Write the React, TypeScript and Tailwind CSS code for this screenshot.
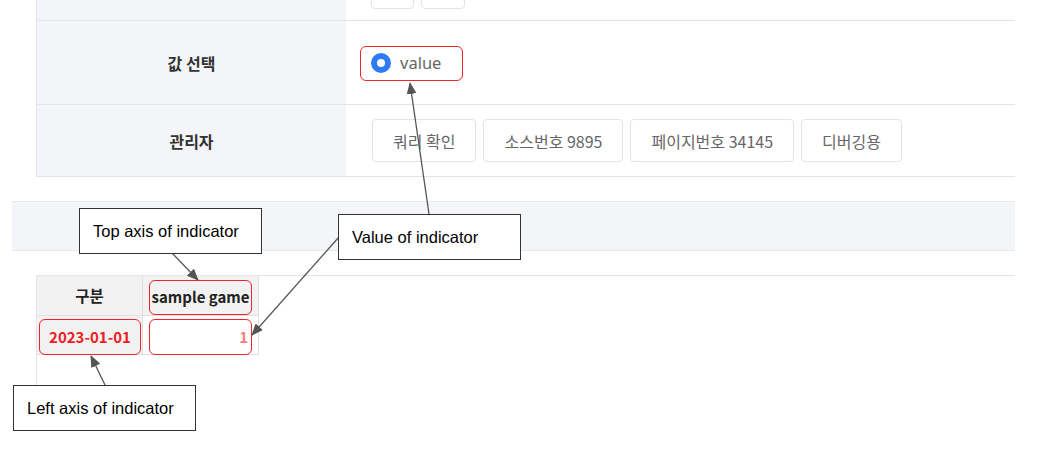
import React from 'react'

const ko = { fontFamily: '"Noto Sans CJK KR", "Noto Sans", sans-serif' }
const arial = { fontFamily: '"Liberation Sans", Arial, sans-serif' }

function Callout({ text, className }: { text: string; className: string }) {
    return (
        <div
            className={`absolute bg-white border-[1.5px] border-[#333] flex items-center pl-[13px] text-[16.5px] text-black ${className}`}
            style={arial}
        >
            {text}
        </div>
    )
}

export default function App() {
    const buttons = ['쿼리 확인', '소스번호 9895', '페이지번호 34145', '디버깅용']

    return (
        <div className="relative w-[1060px] h-[449px] bg-white overflow-hidden" style={ko}>
            {/* Search form table */}
            <div className="ml-[36px] w-[979px] border-l border-[#e4e5e9]">
                <div className="flex h-[21px] border-b border-[#e4e5e9] overflow-hidden">
                    <div className="w-[309px] bg-[#f4f5f9]" />
                    <div className="flex-1 flex items-end gap-[7px] pl-[25px] pb-[11px]">
                        <div className="w-[43px] h-[30px] shrink-0 border border-[#e3e4e8] rounded-[4px]" />
                        <div className="w-[44px] h-[30px] shrink-0 border border-[#e3e4e8] rounded-[4px]" />
                    </div>
                </div>

                <div className="flex h-[84px] border-b border-[#e4e5e9]">
                    <div className="w-[309px] bg-[#f4f5f9] flex items-center justify-center text-[16px] font-bold text-[#333]">
                        값 선택
                    </div>
                    <div className="flex-1 flex items-center pl-[14px] pt-[1px]">
                        <label className="flex items-center h-[35px] w-[103px] pl-[10px] gap-[9px] border-[1.5px] border-[#f2232b] rounded-[6px]">
                            <span className="w-[20px] h-[20px] rounded-full border-[6px] border-[#2f7bf5] bg-white" />
                            <span className="text-[16.5px] text-[#666]" style={{ fontFamily: '"Noto Sans", sans-serif' }}>
                                value
                            </span>
                        </label>
                    </div>
                </div>

                <div className="flex h-[72px] border-b border-[#e4e5e9]">
                    <div className="w-[309px] bg-[#f4f5f9] flex items-center justify-center text-[16px] font-bold text-[#333]">
                        관리자
                    </div>
                    <div className="flex-1 flex items-center gap-[7px] pl-[26px]">
                        {buttons.map((b) => (
                            <button
                                key={b}
                                className="h-[43px] px-[20px] border border-[#e3e4e8] rounded-[4px] bg-white text-[16px] text-[#666]"
                            >
                                {b}
                            </button>
                        ))}
                    </div>
                </div>
            </div>

            {/* Gray band */}
            <div className="ml-[12px] mt-[24px] w-[1003px] h-[50px] bg-[#f4f5f9] border-y border-[#e8e9ed]" />

            {/* Result table */}
            <div className="ml-[36px] mt-[24px] w-[979px] h-[152px] border-t border-l border-[#e4e5e9]">
                <div className="grid grid-cols-[106px_116px] w-[222px] text-[15px] font-bold">
                    <div className="h-[40px] bg-[#f2f2f2] border-r border-b border-[#e0e0e0] flex items-center justify-center text-[#222] text-[15.5px]">
                        구분
                    </div>
                    <div className="h-[40px] bg-[#f2f2f2] border-r border-b border-[#e0e0e0] pt-[4px] pl-[6px] pr-[6px]">
                        <div className="h-[35px] border-[1.5px] border-[#f2232b] rounded-[6px] flex items-center justify-center text-[#222] whitespace-nowrap">
                            sample game
                        </div>
                    </div>
                    <div className="h-[39px] bg-[#f2f2f2] border-r border-b border-[#e0e0e0] pt-[3px] pl-[2px] pr-[1px]">
                        <div className="h-[36px] border-[1.5px] border-[#f2232b] rounded-[6px] flex items-center justify-center text-[#ee1c25]">
                            2023-01-01
                        </div>
                    </div>
                    <div className="h-[39px] bg-white border-r border-b border-[#e0e0e0] pt-[3px] pl-[6px] pr-[6px]">
                        <div className="h-[36px] border-[1.5px] border-[#f2232b] rounded-[6px] flex items-center justify-end pr-[3px] text-[#ff7c7c]">
                            1
                        </div>
                    </div>
                </div>
            </div>

            {/* Annotation arrows */}
            <svg className="absolute inset-0 pointer-events-none" width="1060" height="449">
                <defs>
                    <marker id="head" markerWidth="12" markerHeight="10" refX="11" refY="5" orient="auto" markerUnits="userSpaceOnUse">
                        <path d="M0,0 L12,5 L0,10 Z" fill="#555" />
                    </marker>
                </defs>
                <g stroke="#555" strokeWidth="1.3" fill="none">
                    <line x1="429" y1="214" x2="410" y2="83" markerEnd="url(#head)" />
                    <line x1="172" y1="253" x2="198" y2="280" markerEnd="url(#head)" />
                    <line x1="339" y1="237" x2="252" y2="335" markerEnd="url(#head)" />
                    <line x1="105" y1="385" x2="91" y2="356" markerEnd="url(#head)" />
                </g>
            </svg>

            <Callout text="Top axis of indicator" className="left-[79px] top-[208px] w-[183px] h-[46px]" />
            <Callout text="Value of indicator" className="left-[338px] top-[214px] w-[183px] h-[46px]" />
            <Callout text="Left axis of indicator" className="left-[13px] top-[385px] w-[183px] h-[46px]" />
        </div>
    )
}
